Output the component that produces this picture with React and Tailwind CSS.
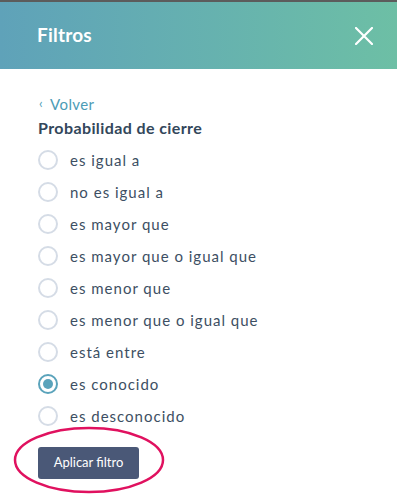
import React from "react";

const options = [
  "es igual a",
  "no es igual a",
  "es mayor que",
  "es mayor que o igual que",
  "es menor que",
  "es menor que o igual que",
  "está entre",
  "es conocido",
  "es desconocido",
];

export default function App() {
  return (
    <div className="w-[397px] h-[504px] bg-white overflow-hidden relative" style={{ fontFamily: "Lato, 'Open Sans', sans-serif" }}>
      <div className="h-[2px] bg-[#5c5c5c]" />
      <div className="h-[67px] bg-gradient-to-r from-[#5fa2b9] to-[#6dbfa5] flex items-center justify-between pl-[37px] pr-[24px]">
        <span className="text-white text-[19px] font-bold tracking-[0.2px]">Filtros</span>
        <svg width="18" height="18" viewBox="0 0 18 18" className="text-white">
          <path d="M1 1L17 17M17 1L1 17" stroke="currentColor" strokeWidth="2.2" strokeLinecap="square" />
        </svg>
      </div>
      <div className="pl-[38px] pt-[26px]">
        <div className="flex items-center text-[#4c9cb6] text-[15px] h-[18px] tracking-[0.4px]">
          <span className="text-[13px] mr-[7px] ml-[1px]">‹</span>
          <span>Volver</span>
        </div>
        <div className="text-[#33475b] text-[16px] font-bold mt-[5px] h-[20px] leading-[20px] tracking-[0.4px]">Probabilidad de cierre</div>
        <div className="mt-[6px] flex flex-col">
          {options.map((o) => {
            const checked = o === "es conocido";
            return (
              <div key={o} className="h-[32px] flex items-center">
                <div className={`w-[20px] h-[20px] rounded-full border-2 flex items-center justify-center ${checked ? "border-[#5aa3bb]" : "border-[#d5dce6]"}`}>
                  {checked && <div className="w-[10px] h-[10px] rounded-full bg-[#5aa3bb]" />}
                </div>
                <span className="ml-[12px] text-[15px] text-[#3d4f63] tracking-[1px]">{o}</span>
              </div>
            );
          })}
        </div>
        <div className="mt-[15px] relative">
          <button className="w-[101px] h-[32px] rounded-[3px] bg-[#4a5877] text-white text-[13px] flex items-center justify-center">Aplicar filtro</button>
          <svg className="absolute left-[-26px] top-[-22px]" width="154" height="70" viewBox="0 0 154 70">
            <ellipse cx="77" cy="35" rx="74" ry="32" fill="none" stroke="#e0115f" strokeWidth="2.5" />
          </svg>
        </div>
      </div>
    </div>
  );
}
